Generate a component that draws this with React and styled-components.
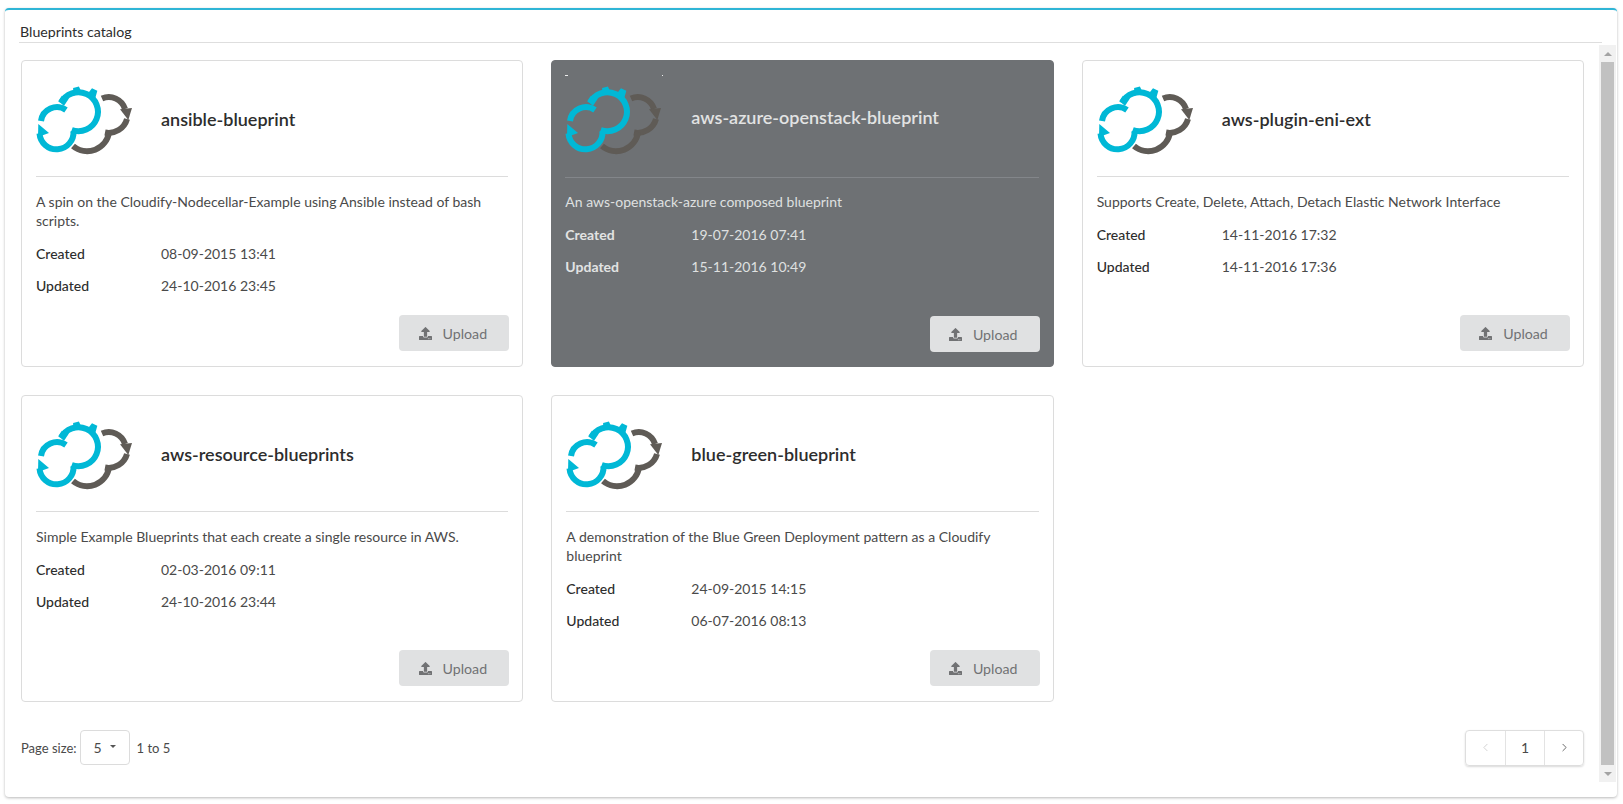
import React from 'react'
import styled, { createGlobalStyle } from 'styled-components'
import { FaUpload } from 'react-icons/fa'
import { ChevronLeft, ChevronRight } from 'lucide-react'

const GlobalStyle = createGlobalStyle`
  html, body {
    margin: 0;
    padding: 0;
    background: #fff;
    font-family: Lato, "Liberation Sans", sans-serif;
    color: #4a4a4a;
    overflow: hidden;
  }
`

const Page = styled.div`
  box-sizing: border-box;
  height: 804px;
  padding: 8px 6px 7px 5px;
`
const Widget = styled.section`
  box-sizing: border-box;
  height: 100%;
  display: flex;
  flex-direction: column;
  background: #fff;
  border-top: 2px solid #2fb5d6;
  border-radius: 4px;
  box-shadow: 0 1px 3px rgba(0, 0, 0, 0.28);
`
const WidgetTitle = styled.h4`
  box-sizing: border-box;
  height: 33px;
  margin: 0 15px 0 14px;
  padding: 12px 0 0 1px;
  border-bottom: 1px solid #dedede;
  font-size: 14.2px;
  line-height: 19px;
  font-weight: 400;
  color: #2d2d2d;
`
const WidgetBody = styled.div`
  flex: 1;
  display: flex;
  min-height: 0;
  margin-top: 2px;
`
const Content = styled.div`
  flex: 1;
  min-width: 0;
  padding: 15px 15px 0 16px;
`
const CardGrid = styled.div`
  display: grid;
  grid-template-columns: repeat(3, 1fr);
  grid-auto-rows: 307px;
  gap: 28.4px 28px;
`
const Card = styled.article`
  box-sizing: border-box;
  display: flex;
  flex-direction: column;
  padding: 0 14px ${p => (p.$active ? '14px' : '15px')} ${p => (p.$active ? '13px' : '14px')};
  border: 1px solid ${p => (p.$active ? '#6e7174' : '#dcdcdc')};
  border-radius: 4px;
  background: ${p => (p.$active ? '#6e7174' : '#fff')};
  color: ${p => (p.$active ? '#dfe0e0' : '#4a4a4a')};
`
const CardHeader = styled.header`
  display: flex;
  align-items: center;
  height: ${p => (p.$active ? '116px' : '115px')};
  border-bottom: 1px solid ${p => (p.$active ? '#83868a' : '#dcdcdc')};
`
const LogoBox = styled.div`
  flex: 0 0 ${p => (p.$active ? '126px' : '125px')};
  display: flex;
  align-items: center;
`
const CardTitle = styled.h3`
  margin: 0;
  padding-bottom: ${p => (p.$active ? '4px' : '0')};
  font-size: 18px;
  line-height: 24px;
  font-weight: 600;
  color: ${p => (p.$active ? '#e2e3e3' : '#2d2d2d')};
`
const Description = styled.p`
  margin: ${p => (p.$active ? '14px' : '15px')} 0 0;
  font-size: 14px;
  line-height: 19px;
`
const MetaList = styled.dl`
  margin: 8px 0 0;
  font-size: 14px;
  line-height: 32px;
`
const MetaRow = styled.div`
  display: grid;
  grid-template-columns: ${p => (p.$active ? '126px' : '125px')} 1fr;
`
const MetaLabel = styled.dt`
  font-weight: ${p => (p.$active ? 700 : 500)};
  color: ${p => (p.$active ? '#e2e3e3' : '#2d2d2d')};
`
const MetaValue = styled.dd`
  margin: 0;
`
const CardActions = styled.div`
  margin: auto -1px 0 0;
  display: flex;
  justify-content: flex-end;
`
const UploadButton = styled.button`
  box-sizing: border-box;
  width: 110px;
  height: 36px;
  display: flex;
  align-items: center;
  justify-content: center;
  gap: 11px;
  padding: 0 3px 0 0;
  border: 0;
  border-radius: 4px;
  background: #e0e1e2;
  color: #717274;
  font-family: inherit;
  font-size: 14.2px;
`
const Footer = styled.footer`
  display: flex;
  align-items: center;
  justify-content: space-between;
  margin-top: 27.6px;
`
const PageSize = styled.div`
  display: flex;
  align-items: center;
  font-size: 13px;
  color: #4a4a4a;
`
const SizeSelect = styled.div`
  box-sizing: border-box;
  width: 50px;
  height: 35px;
  margin: 0 7px 0 3px;
  display: flex;
  align-items: center;
  justify-content: center;
  gap: 8px;
  border: 1px solid #dcdcdc;
  border-radius: 4px;
  font-size: 14px;
`
const Caret = styled.span`
  width: 0;
  height: 0;
  margin-top: -2px;
  border-left: 3px solid transparent;
  border-right: 3px solid transparent;
  border-top: 3px solid #555;
`
const Range = styled.span`
  font-size: 13px;
`
const Pager = styled.nav`
  box-sizing: border-box;
  display: flex;
  height: 36px;
  border: 1px solid #dedede;
  border-radius: 4px;
  box-shadow: 0 1px 2px rgba(0, 0, 0, 0.15);
`
const PagerItem = styled.span`
  box-sizing: border-box;
  width: 39px;
  display: flex;
  align-items: center;
  justify-content: center;
  font-size: 14px;
  color: ${p => (p.$disabled ? '#c9c9c9' : '#4a4a4a')};
  & + & {
    border-left: 1px solid #e3e3e3;
  }
`
const ScrollTrack = styled.div`
  flex: 0 0 17px;
  height: 737px;
  margin-right: 1px;
  display: flex;
  flex-direction: column;
  background: #f1f1f1;
`
const ScrollArrow = styled.div`
  height: 17px;
  display: flex;
  align-items: center;
  justify-content: center;
  &::before {
    content: '';
    width: 0;
    height: 0;
    border-left: 4px solid transparent;
    border-right: 4px solid transparent;
    ${p => (p.$down ? 'border-top: 4px solid #a3a3a3;' : 'border-bottom: 4px solid #a3a3a3;')}
  }
`
const ScrollThumb = styled.div`
  flex: 1;
  margin: 0 2px;
  background: #c1c1c1;
`

const Logo = ({ active }) => (
  <svg width="98" height="70" viewBox="16 13 98 70" overflow="visible">
    {active && (
      <g fill="#eee">
        <rect x="16" y="4" width="3" height="1" />
        <rect x="113" y="4" width="1" height="1" />
      </g>
    )}
    <g fill="none" stroke="#5f5b56" strokeWidth="6">
      <path d="M82 27.5 A17 17 0 0 1 105 38" />
      <path d="M107 48 A19 19 0 0 1 85 61.5" />
      <path d="M89 61 A22 22 0 0 1 53 75" />
    </g>
    <path d="M100 38.3 L112 37 L108.3 49 Z" fill="#5f5b56" />
    <g fill="none" stroke="#00b8d6" strokeWidth="6">
      <path d="M21 50 A16 16 0 0 1 46 39" />
      <path d="M41 32 A19.5 19.5 0 1 1 51.7 59" />
      <path d="M19.5 62.5 A17 17 0 0 0 53.5 60" />
    </g>
    <path d="M18 66 L18.3 53 L29 62 Z" fill="#00b8d6" />
    <g fill="#00b8d6">
      <path d="M58 23 L59.5 15.5 L65.5 15.5 L67 23 Z" transform="rotate(-56 62.3 42.3)" />
      <path d="M58 23 L59.5 15.5 L65.5 15.5 L67 23 Z" transform="rotate(-14 62.3 42.3)" />
      <path d="M58 23 L59.5 15.5 L65.5 15.5 L67 23 Z" transform="rotate(27 62.3 42.3)" />
    </g>
  </svg>
)

const blueprints = [
  {
    name: 'ansible-blueprint',
    description: 'A spin on the Cloudify-Nodecellar-Example using Ansible instead of bash scripts.',
    created: '08-09-2015 13:41',
    updated: '24-10-2016 23:45',
  },
  {
    name: 'aws-azure-openstack-blueprint',
    description: 'An aws-openstack-azure composed blueprint',
    created: '19-07-2016 07:41',
    updated: '15-11-2016 10:49',
    active: true,
  },
  {
    name: 'aws-plugin-eni-ext',
    description: 'Supports Create, Delete, Attach, Detach Elastic Network Interface',
    created: '14-11-2016 17:32',
    updated: '14-11-2016 17:36',
  },
  {
    name: 'aws-resource-blueprints',
    description: 'Simple Example Blueprints that each create a single resource in AWS.',
    created: '02-03-2016 09:11',
    updated: '24-10-2016 23:44',
  },
  {
    name: 'blue-green-blueprint',
    description: 'A demonstration of the Blue Green Deployment pattern as a Cloudify blueprint',
    created: '24-09-2015 14:15',
    updated: '06-07-2016 08:13',
  },
]

const App = () => (
  <Page>
    <GlobalStyle />
    <Widget>
      <WidgetTitle>Blueprints catalog</WidgetTitle>
      <WidgetBody>
        <Content>
          <CardGrid>
            {blueprints.map(b => (
              <Card key={b.name} $active={b.active}>
                <CardHeader $active={b.active}>
                  <LogoBox $active={b.active}>
                    <Logo active={b.active} />
                  </LogoBox>
                  <CardTitle $active={b.active}>{b.name}</CardTitle>
                </CardHeader>
                <Description $active={b.active}>{b.description}</Description>
                <MetaList>
                  <MetaRow $active={b.active}>
                    <MetaLabel $active={b.active}>Created</MetaLabel>
                    <MetaValue>{b.created}</MetaValue>
                  </MetaRow>
                  <MetaRow $active={b.active}>
                    <MetaLabel $active={b.active}>Updated</MetaLabel>
                    <MetaValue>{b.updated}</MetaValue>
                  </MetaRow>
                </MetaList>
                <CardActions>
                  <UploadButton>
                    <FaUpload size={13} />
                    Upload
                  </UploadButton>
                </CardActions>
              </Card>
            ))}
          </CardGrid>
          <Footer>
            <PageSize>
              Page size:
              <SizeSelect>
                5 <Caret />
              </SizeSelect>
              <Range>1 to 5</Range>
            </PageSize>
            <Pager>
              <PagerItem $disabled><ChevronLeft size={13} strokeWidth={1.5} /></PagerItem>
              <PagerItem>1</PagerItem>
              <PagerItem><ChevronRight size={13} strokeWidth={1.5} /></PagerItem>
            </Pager>
          </Footer>
        </Content>
        <ScrollTrack>
          <ScrollArrow />
          <ScrollThumb />
          <ScrollArrow $down />
        </ScrollTrack>
      </WidgetBody>
    </Widget>
  </Page>
)

export default App
